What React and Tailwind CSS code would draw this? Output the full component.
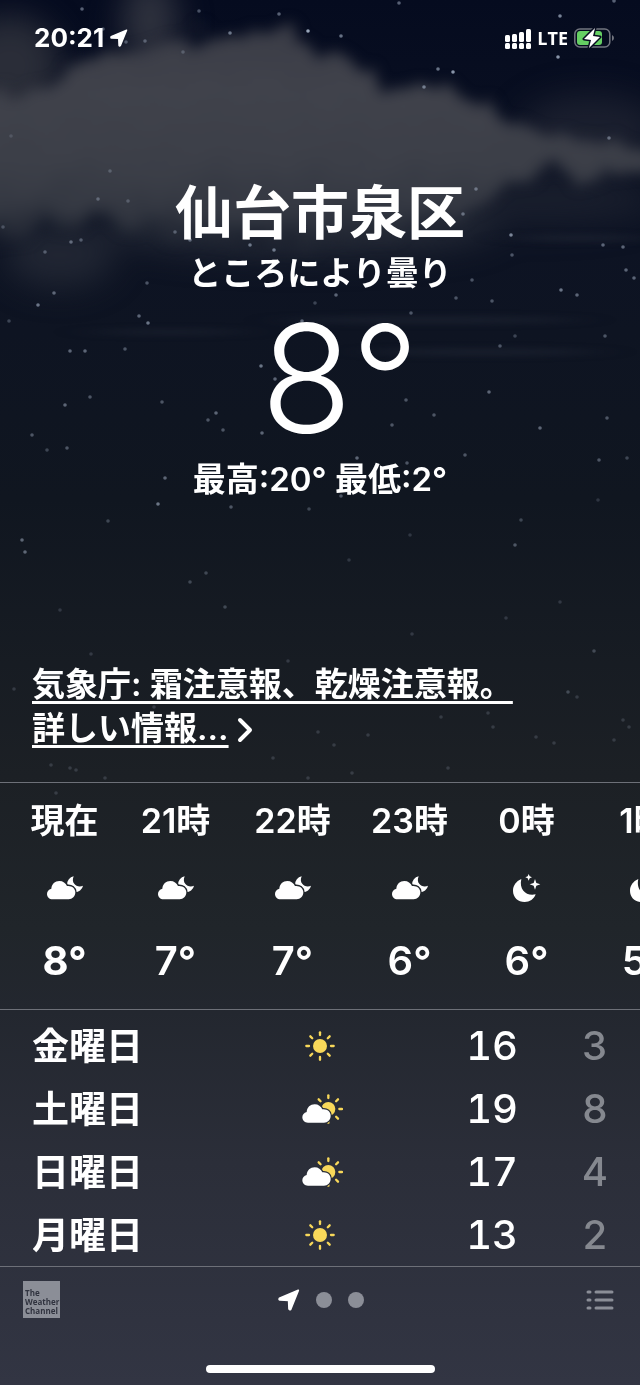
import React from 'react';

const hours = [
  { label: '現在', icon: 'cloudMoon', temp: '8°', now: true },
  { label: '21時', icon: 'cloudMoon', temp: '7°' },
  { label: '22時', icon: 'cloudMoon', temp: '7°' },
  { label: '23時', icon: 'cloudMoon', temp: '6°' },
  { label: '0時', icon: 'moonStars', temp: '6°' },
  { label: '1時', icon: 'moonStars', temp: '5°' }
];

const days = [
  { name: '金曜日', icon: 'sun', high: 16, low: 3 },
  { name: '土曜日', icon: 'cloudSun', high: 19, low: 8 },
  { name: '日曜日', icon: 'cloudSun', high: 17, low: 4 },
  { name: '月曜日', icon: 'sun', high: 13, low: 2 }
];

// x, y, opacity
const stars = [
  [82, 9, 0.5], [199, 11, 0.4], [279, 14, 0.5], [399, 3, 0.5], [614, 1, 0.5], [560, 16, 0.7], [308, 31, 0.9],
  [341, 36, 0.6], [230, 33, 0.6], [145, 41, 0.4], [103, 29, 0.4], [183, 52, 0.3], [126, 42, 0.4], [558, 57, 0.8], [438, 69, 0.6],
  [453, 72, 0.8], [424, 87, 0.6], [609, 138, 0.5], [476, 189, 0.5], [463, 214, 0.5], [511, 235, 0.7],
  [603, 245, 0.5], [623, 247, 0.5], [512, 255, 0.4], [626, 270, 0.5], [634, 278, 0.5], [472, 280, 0.4],
  [561, 290, 0.6], [577, 295, 0.5], [456, 298, 0.4], [492, 301, 0.4], [411, 313, 0.4], [515, 336, 0.3],
  [500, 346, 0.4], [605, 336, 0.4], [250, 245, 0.6], [274, 250, 0.6], [336, 295, 0.5], [315, 303, 0.3],
  [302, 321, 0.5], [147, 283, 0.4], [139, 316, 0.5], [148, 323, 0.6], [125, 349, 0.4], [85, 351, 0.5],
  [70, 351, 0.5], [54, 293, 0.5], [38, 305, 0.6], [9, 321, 0.3], [45, 252, 0.4], [71, 242, 0.5], [81, 240, 0.4],
  [98, 199, 0.4], [128, 201, 0.3], [110, 171, 0.3], [3, 227, 0.3], [11, 136, 0.2], [175, 232, 0.4], [190, 240, 0.5],
  [261, 366, 0.6], [275, 379, 0.5], [162, 402, 0.4], [216, 413, 0.5], [208, 420, 0.4], [223, 430, 0.4],
  [262, 433, 0.5], [406, 400, 0.4], [434, 415, 0.4], [392, 425, 0.4], [489, 392, 0.5], [465, 455, 0.4],
  [357, 458, 0.5], [407, 463, 0.4], [165, 478, 0.5], [158, 504, 0.6], [231, 507, 0.4], [341, 496, 0.4],
  [65, 405, 0.5], [90, 397, 0.4], [32, 435, 0.4], [67, 448, 0.4], [47, 450, 0.3], [22, 540, 0.5], [25, 552, 0.5], [108, 521, 0.3], [309, 509, 0.3],
  [607, 418, 0.4], [540, 428, 0.5], [599, 460, 0.4], [627, 458, 0.3], [521, 520, 0.3], [515, 545, 0.4], [598, 500, 0.2],
  [410, 535, 0.2], [349, 560, 0.2], [190, 582, 0.3], [206, 573, 0.3], [225, 607, 0.3], [60, 610, 0.2],
  [506, 618, 0.2], [560, 602, 0.2], [412, 634, 0.2], [91, 654, 0.2], [594, 651, 0.3], [14, 689, 0.2],
  [568, 692, 0.3], [577, 697, 0.2], [488, 713, 0.2], [441, 717, 0.2], [493, 727, 0.2], [623, 720, 0.2],
  [629, 727, 0.2], [536, 737, 0.2], [554, 743, 0.2], [614, 740, 0.2], [318, 732, 0.2], [368, 735, 0.2],
  [334, 745, 0.2], [273, 758, 0.2], [448, 768, 0.2], [352, 773, 0.2], [308, 778, 0.2], [51, 765, 0.2],
  [70, 768, 0.2], [76, 770, 0.2], [105, 778, 0.2], [154, 707, 0.2], [288, 661, 0.2], [56, 793, 0.2]
];

const Sky = () => (
  <svg className="absolute left-0 top-0 w-full pointer-events-none" viewBox="0 0 640 800" aria-hidden="true">
    <defs>
      <filter id="billow" x="-20%" y="-20%" width="140%" height="140%" colorInterpolationFilters="sRGB">
        <feTurbulence type="fractalNoise" baseFrequency="0.03" numOctaves="5" seed="4" result="noise" />
        <feDisplacementMap in="SourceGraphic" in2="noise" scale="40" xChannelSelector="R" yChannelSelector="G" />
        <feGaussianBlur stdDeviation="7" />
      </filter>
      <filter id="wisp" x="-50%" y="-50%" width="200%" height="200%" colorInterpolationFilters="sRGB">
        <feGaussianBlur stdDeviation="16" />
      </filter>
      <filter id="streak" x="-20%" y="-200%" width="140%" height="500%" colorInterpolationFilters="sRGB">
        <feGaussianBlur stdDeviation="20 3" />
      </filter>
      <linearGradient id="cloud" x1="0" y1="20" x2="0" y2="255" gradientUnits="userSpaceOnUse">
        <stop offset="0" stopColor="#3a3c46" />
        <stop offset="0.3" stopColor="#40424b" />
        <stop offset="0.6" stopColor="#3c3f48" />
        <stop offset="0.8" stopColor="#343842" />
        <stop offset="1" stopColor="#131927" />
      </linearGradient>
    </defs>
    <g filter="url(#wisp)">
      <ellipse cx="150" cy="20" rx="28" ry="44" fill="#3a3c46" opacity="0.8" />
      <ellipse cx="10" cy="65" rx="50" ry="50" fill="#33363f" opacity="0.8" />
      <ellipse cx="60" cy="255" rx="55" ry="32" fill="#262b37" opacity="0.8" />
      <ellipse cx="590" cy="130" rx="70" ry="36" fill="#262a37" opacity="0.6" />
      <ellipse cx="300" cy="225" rx="200" ry="30" fill="#2a2f3b" opacity="0.8" />
      <ellipse cx="540" cy="200" rx="120" ry="24" fill="#1d2230" opacity="0.8" />
    </g>
    <g filter="url(#streak)" fill="#1d2331" opacity="0.7">
      <ellipse cx="430" cy="320" rx="150" ry="4" />
      <ellipse cx="480" cy="352" rx="120" ry="4" />
      <ellipse cx="170" cy="332" rx="80" ry="3" />
      <ellipse cx="580" cy="238" rx="70" ry="4" />
    </g>
    <path
      d="M-40 95 L20 96 L50 72 L100 58 L160 50 L180 34 L215 38 L250 40 L285 24 L315 46 L355 62 L390 86 L440 92 L485 106 L530 126 L570 138 L610 140 L690 168 L610 174 L550 172 L500 184 L470 206 L430 226 L340 245 L250 248 L170 238 L110 222 L70 228 L-40 236 Z"
      fill="url(#cloud)"
      filter="url(#billow)"
    />
    {stars.map(([x, y, opacity]) => (
      <circle key={`${x}-${y}`} cx={x} cy={y} r="1.8" fill="#a9b6ca" opacity={opacity} />
    ))}
  </svg>
);

const LocationArrow = ({ className }) => (
  <svg className={className} viewBox="0 0 64 64" aria-hidden="true">
    <path d="M59 4 L4 27 Q2 31 5 32 L31 33 L32 58 Q34 62 37 59 Z" fill="white" stroke="white" strokeWidth="5" strokeLinejoin="round" />
  </svg>
);

const rayAngles = [0, 45, 90, 135, 180, 225, 270, 315];

const SunShape = ({ cx, cy }) => (
  <g transform={`translate(${cx} ${cy})`}>
    <circle r="21" fill="#f8d85a" />
    {rayAngles.map((angle) => (
      <line key={angle} y1="-41" y2="-33" stroke="#f8d85a" strokeWidth="7" strokeLinecap="round" transform={`rotate(${angle})`} />
    ))}
  </g>
);

const cloudPath = 'M17 55 C7 55 0 48 0 39 C0 31 5 25 13 23 C14 9 24 0 37 0 C48 0 56 6 60 15 C74 13 85 22 85 34 C85 46 76 55 65 55 Z';

const icons = {
  sun: (
    <svg className="w-[30px] h-[30px]" viewBox="0 0 90 90" role="img" aria-label="晴れ">
      <SunShape cx={45} cy={45} />
    </svg>
  ),
  cloudSun: (
    <svg className="w-[45px] h-[30px]" viewBox="-12 0 135 90" role="img" aria-label="晴れ時々曇り">
      <SunShape cx={79} cy={45} />
      <path d={cloudPath} transform="translate(1 31)" fill="white" stroke="#292d37" strokeWidth="8" paintOrder="stroke" />
    </svg>
  ),
  cloudMoon: (
    <svg className="w-9 h-6" viewBox="0 0 108 72" role="img" aria-label="曇り">
      <path d="M80 1 A24 24 0 1 0 108 29 C93 37 70 24 80 1 Z" fill="white" />
      <path d={cloudPath} transform="translate(0 15)" fill="white" stroke="#20252a" strokeWidth="8" paintOrder="stroke" />
    </svg>
  ),
  moonStars: (
    <svg className="w-7 h-7" viewBox="0 0 84 84" role="img" aria-label="晴れ">
      <path d="M25 15 C9 22 0 35 0 50 C0 70 15 84 35 84 C50 84 63 76 68 61 C42 68 17 48 25 15 Z" fill="white" />
      <path d="M47 0 L50 7 L57 10 L50 13 L47 20 L44 13 L37 10 L44 7 Z" fill="white" />
      <path d="M66 15 L70 27 L82 31 L70 35 L66 47 L62 35 L50 31 L62 27 Z" fill="white" />
    </svg>
  )
};

const SignalIcon = () => (
  <svg className="w-[26px] h-[21px]" viewBox="0 0 26 21" fill="white" aria-hidden="true">
    {[7, 6, 4, 1].map((top, index) => (
      <g key={top}>
        <rect x={index * 7} y={top} width="5" height={14 - top} rx="1.5" />
        <rect x={index * 7} y="15" width="5" height="6" rx="1.5" />
      </g>
    ))}
  </svg>
);

const BatteryIcon = () => (
  <svg className="w-10 h-[22px]" viewBox="0 0 40 22" aria-hidden="true">
    <rect x="0.8" y="2" width="35" height="18" rx="5" fill="none" stroke="#72757f" strokeWidth="1.5" />
    <path d="M38 8 Q40 9 40 11 Q40 13 38 14 Z" fill="#72757f" />
    <rect x="3" y="4" width="25" height="14" rx="3" fill="#65cf63" />
    <path d="M21 1 L10 12 L17 13 L15 21 L26 10 L19 9 Z" fill="white" stroke="#080d20" strokeWidth="3" strokeLinejoin="round" paintOrder="stroke" />
  </svg>
);

const StatusBar = () => (
  <div className="flex items-center justify-between pt-5 pl-[34px] pr-[26px]">
    <div className="flex items-center gap-1.5">
      <span className="text-[26px] leading-9 font-bold">20:21</span>
      <LocationArrow className="w-[18px] h-[18px]" />
    </div>
    <div className="flex items-center gap-1.5">
      <SignalIcon />
      <span className="font-['Open_Sans',sans-serif] text-[18px] leading-9 font-bold">LTE</span>
      <BatteryIcon />
    </div>
  </div>
);

const CurrentWeather = () => (
  <header className="flex flex-col items-center text-center pt-[115px]">
    <h1 className="text-[58px] leading-[84px] font-semibold">仙台市泉区</h1>
    <p className="text-[33px] leading-9 font-semibold">ところにより曇り</p>
    <p className="text-[150px] leading-[160px] font-light pl-10 pt-2">8°</p>
    <p className="text-[33px] leading-10 font-semibold">最高:20° 最低:2°</p>
  </header>
);

const Alert = () => (
  <a href="#alert" className="block px-8 pt-[163px] pb-8 text-[33px] leading-[44px] font-semibold">
    <span className="underline decoration-[3px] underline-offset-[5px]">
      気象庁: 霜注意報、乾燥注意報。
      <br />
      詳しい情報...
    </span>
    <svg className="inline-block w-4 h-8 ml-2" viewBox="0 0 16 32" aria-hidden="true">
      <path d="M3 5 L13 15 L3 25" fill="none" stroke="white" strokeWidth="4" strokeLinecap="round" strokeLinejoin="round" />
    </svg>
  </a>
);

const HourlyForecast = () => (
  <ul className="flex overflow-hidden border-t border-[#6d7078] pl-3 pt-4 pb-5">
    {hours.map((hour) => (
      <li
        key={hour.label}
        className={`flex flex-col items-center shrink-0 ${hour.now ? 'w-[105px] font-bold' : 'w-[117px] font-semibold'}`}
      >
        <span className="text-[34px] leading-[44px]">{hour.label}</span>
        <span className="flex items-center justify-center h-[90px]">{icons[hour.icon]}</span>
        <span className="text-[40px] leading-[56px]">{hour.temp}</span>
      </li>
    ))}
  </ul>
);

const DailyForecast = () => (
  <div className="border-t border-[#6d7078] pt-1">
    <table className="w-full text-[40px] leading-[60px] font-medium tabular-nums">
      <tbody>
        {days.map((day) => (
          <tr key={day.name} className="h-[63px]">
            <th scope="row" className="w-2/5 p-0 pl-8 pt-[3px] text-left text-[37px] font-semibold">{day.name}</th>
            <td className="w-1/5 p-0">
              <div className="flex justify-center">{icons[day.icon]}</div>
            </td>
            <td className="p-0 text-right">{day.high}</td>
            <td className="w-[122px] p-0 pr-8 text-right text-[#85888f]">{day.low}</td>
          </tr>
        ))}
      </tbody>
    </table>
  </div>
);

const Footer = () => (
  <footer className="border-t border-[#6d7078]">
    <div className="grid grid-cols-3 items-center h-[65px] pl-[23px] pr-[26px]">
      <a href="#weather-channel" className="flex items-end w-[37px] h-[37px] bg-[#8b8e97] text-[#30333f] font-['Open_Sans','Noto_Sans',sans-serif] text-[8px] leading-[9px] font-bold pl-[2px] pb-[3px]">
        <span>The<br />Weather<br />Channel</span>
      </a>
      <nav className="flex items-center justify-center gap-4 pl-1">
        <button type="button" aria-label="現在地">
          <LocationArrow className="w-[22px] h-[22px]" />
        </button>
        <button type="button" aria-label="2ページ目" className="w-4 h-4 rounded-full bg-[#8b8e97]" />
        <button type="button" aria-label="3ページ目" className="w-4 h-4 rounded-full bg-[#8b8e97]" />
      </nav>
      <button type="button" aria-label="都市リスト" className="justify-self-end">
        <svg className="w-7 h-5" viewBox="0 0 28 20" stroke="#8b8e97" strokeWidth="3" strokeLinecap="round" aria-hidden="true">
          <path d="M2 2h2M10 2h16M2 10h2M10 10h16M2 18h2M10 18h16" />
        </svg>
      </button>
    </div>
    <div className="flex justify-center pt-[33px] pb-3">
      <div className="w-[229px] h-2 rounded-full bg-white" />
    </div>
  </footer>
);

const App = () => (
  <div className="relative overflow-hidden min-h-screen text-white font-['Inter','Noto_Sans_CJK_JP',sans-serif] bg-linear-[180deg,#050b1f_0%,#0d1323_18%,#101620_36%,#1c2025_56%,#20252a_67%,#23272f_73%,#2b2e39_84%,#323543_100%]">
    <Sky />
    <div className="relative">
      <StatusBar />
      <CurrentWeather />
      <Alert />
      <HourlyForecast />
      <DailyForecast />
      <Footer />
    </div>
  </div>
);

export default App;
